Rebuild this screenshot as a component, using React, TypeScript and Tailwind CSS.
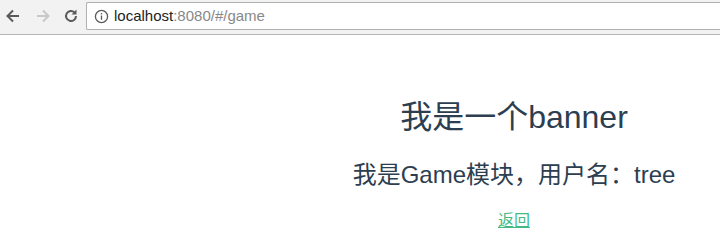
export default function App() {
  return (
    <div className="w-[720px] h-[251px] bg-white overflow-hidden" style={{ fontFamily: '"Liberation Sans", "Noto Sans CJK SC", sans-serif' }}>
      <div className="h-[35px] bg-[#f2f2f2] border-b border-[#b4b4b4] flex items-start">
        <div className="flex items-center h-[31px] pl-[3px] gap-[8px] w-[86px]">
          <svg width="18" height="18" viewBox="0 0 18 18" className="ml-[1px]">
            <path d="M15 9H4M9 3.5L3.5 9 9 14.5" stroke="#5a5a5a" strokeWidth="2" fill="none" />
          </svg>
          <svg width="18" height="18" viewBox="0 0 18 18" className="ml-[4px]">
            <path d="M3 9h11M9 3.5L14.5 9 9 14.5" stroke="#c8c8c8" strokeWidth="2" fill="none" />
          </svg>
          <svg width="18" height="18" viewBox="0 0 18 18" className="ml-[2px]">
            <path d="M14 9a5 5 0 1 1-1.5-3.6" stroke="#5a5a5a" strokeWidth="2" fill="none" />
            <path d="M14.5 2.5v5h-5z" fill="#5a5a5a" />
          </svg>
        </div>
        <div className="mt-[2px] h-[28px] flex-1 bg-white border border-[#b0b0b0] border-r-0 rounded-l-[2px] flex items-center pl-[7px]">
          <svg width="15" height="15" viewBox="0 0 16 16">
            <circle cx="8" cy="8" r="6.5" stroke="#5a5a5a" strokeWidth="1.4" fill="none" />
            <rect x="7.3" y="7" width="1.4" height="4.5" fill="#5a5a5a" />
            <rect x="7.3" y="4.3" width="1.4" height="1.5" fill="#5a5a5a" />
          </svg>
          <span className="ml-[5px] text-[15px] text-[#222]">localhost</span>
          <span className="text-[15px] text-[#888]">:8080/#/game</span>
        </div>
      </div>
      <div className="ml-[308px] w-[412px] flex flex-col items-center text-[#2c3e50]">
        <h1 className="mt-[64px] text-[32px] leading-[37px]">我是一个banner</h1>
        <h2 className="mt-[25px] text-[24px] leading-[28px]">我是Game模块，用户名：tree</h2>
        <a href="#" className="mt-[23px] text-[16px] leading-[18px] text-[#42b983] underline">返回</a>
      </div>
    </div>
  );
}
